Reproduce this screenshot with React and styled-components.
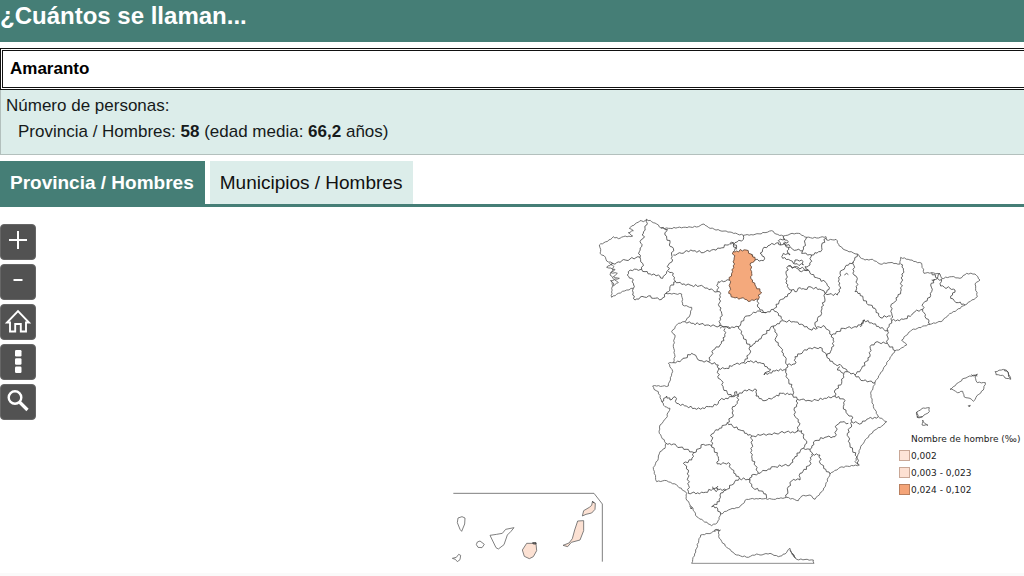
import React from "react";
import styled, { createGlobalStyle, css } from "styled-components";

const teal = "#457e76";
const mint = "#dcedea";

const GlobalStyle = createGlobalStyle`
  *, *::before, *::after { box-sizing: border-box; }
  body {
    margin: 0;
    background: #fff;
    color: #161a1a;
    font-family: "Liberation Sans", Arial, sans-serif;
    font-size: 17px;
  }
`;

const Header = styled.header`
  height: 42px;
  background: ${teal};
  color: #fff;
`;

const Title = styled.h1`
  margin: 0;
  font-size: 24px;
  line-height: 32px;
  font-weight: 700;
`;

const NameInput = styled.input`
  display: block;
  width: 100%;
  height: 42px;
  margin-top: 6px;
  padding: 0 7px;
  border: 3px double #111;
  border-right: 0;
  border-radius: 0;
  background: #fff;
  color: #000;
  font: inherit;
  font-weight: 700;
  outline: none;
`;

const Summary = styled.section`
  height: 65px;
  padding: 3px 5px;
  border: 1px solid #b3c0bd;
  border-top: 0;
  border-right: 0;
  background: ${mint};
`;

const SummaryLine = styled.p`
  margin: 0;
  padding-left: ${(p) => (p.$nested ? 12 : 0)}px;
  line-height: 26px;
`;

const Tabs = styled.div`
  display: flex;
  gap: 5px;
  margin-top: 6px;
  border-bottom: 3px solid ${teal};
`;

const Tab = styled.button`
  height: 43px;
  padding: 0 11px 0 10px;
  border: 0;
  background: ${mint};
  color: #111;
  font: inherit;
  font-size: 19px;
  ${(p) =>
    p.$active &&
    css`
      background: ${teal};
      color: #fff;
      font-weight: 700;
    `}
`;

const MapArea = styled.main`
  position: relative;
  display: flex;
  height: 366px;
`;

const Tools = styled.div`
  display: flex;
  flex-direction: column;
  gap: 4px;
  padding-top: 17px;
`;

const ToolButton = styled.button`
  display: grid;
  place-items: center;
  width: 36px;
  height: 36px;
  padding: 0;
  border: 1px solid #666;
  border-radius: 4px;
  background: #525252;
`;

const MapSvg = styled.svg`
  flex: 1;
  min-width: 0;
  height: 366px;
  fill: none;
  stroke: #444;
  stroke-width: 2.5;
  stroke-linejoin: round;
`;

const Legend = styled.aside`
  position: absolute;
  right: 5px;
  bottom: 75px;
  width: 120px;
  color: #222;
  font-family: "DejaVu Sans", Verdana, sans-serif;
  font-size: 9px;
  white-space: nowrap;
`;

const LegendTitle = styled.h2`
  margin: 0;
  padding-left: 12px;
  font-size: 9px;
  font-weight: 400;
  line-height: 15px;
`;

const LegendList = styled.ul`
  margin: 0;
  padding: 0;
  list-style: none;
`;

const LegendItem = styled.li`
  display: flex;
  align-items: center;
  gap: 1px;
  height: 17px;
`;

const Swatch = styled.span`
  width: 11px;
  height: 11px;
  border: 1px solid ${(p) => p.$edge};
  background: ${(p) => p.$fill};
`;

const Footer = styled.footer`
  height: 3px;
  background: #fafafa;
`;

// Adds small irregularities along each stretch of a boundary.
const WAVE = [0.9, -0.6, 0.3, 1, -1, 0.5, -0.3, -0.9, 0.7, -0.1];
function fray(points, amount) {
  const pts = points.split(" ").map((p) => p.split(",").map(Number));
  let n = Math.abs(pts[0][0] + pts[0][1]);
  let d = `M${pts[0].join(" ")}`;
  for (let i = 1; i < pts.length; i++) {
    const [ax, ay] = pts[i - 1];
    const [bx, by] = pts[i];
    const len = Math.hypot(bx - ax, by - ay);
    const parts = Math.max(1, Math.round(len / 6));
    for (let k = 1; k < parts; k++) {
      const off = WAVE[Math.round(n++) % WAVE.length] * amount;
      const x = ax + ((bx - ax) * k) / parts - ((by - ay) / len) * off;
      const y = ay + ((by - ay) * k) / parts + ((bx - ax) / len) * off;
      d += `L${x.toFixed(1)} ${y.toFixed(1)}`;
    }
    d += `L${bx} ${by}`;
  }
  return d;
}

const SHEETS = [
  {
    id: "northwest", x: 450, y: 0,
    coast: [
      "65,262 65,235 72,222 62,212 88,205 70,200 82,190 62,188 75,178 50,172 68,160 50,153 42,137 30,130 32,118 28,105 42,98 62,88 70,80 85,86 100,80 128,78 115,68 130,62 118,55 135,42 150,32 160,35 170,28 185,35 200,42 213,54 235,55 280,52 325,50 342,42 355,52 390,62 420,66 460,76",
      "65,262 85,250 110,240 130,235",
      "62,212 70,228 85,218 74,210 60,195 72,170 58,160",
      "228,250 275,252 278,285 305,292 300,315 285,335 265,340 245,365",
    ],
    border: [
      "170,28 172,40 165,55 160,70 160,85 150,95 155,110 148,125 150,142",
      "62,165 80,158 95,152 120,147 150,142",
      "150,142 158,160 155,178 140,178 115,185 112,195 125,205 130,220 130,235",
      "155,178 165,185 185,195 205,195 218,205 225,195",
      "213,54 232,58 225,75 240,98 238,105 250,115 245,135 248,150 235,165 235,180 225,195",
      "235,183 250,190 252,208 258,215 240,230 235,245 228,252",
      "130,235 128,255 135,270 150,262 175,258 190,265 215,268 228,250",
      "250,135 275,130 290,122 315,122 340,128 365,120 390,115 410,105 430,98",
      "420,102 430,98 440,112 430,125",
      "418,210 400,215 385,215 382,245",
      "258,218 300,225 340,230 382,245",
      "382,245 392,250 388,290 395,310 388,348",
      "285,335 310,340 350,345 388,348 405,350 420,355",
    ],
  },
  {
    id: "north", x: 870, y: 0,
    coast: [
      "40,76 75,73 105,68 125,62 138,72 160,78 180,72 205,70 230,82 260,84 288,80 290,90 318,88 328,108 345,120 382,132",
    ],
    border: [
      "40,76 40,88 15,98 10,105 20,118",
      "62,132 75,150 100,152 102,140 90,130 98,118 120,105 145,98 152,105",
      "160,78 165,88 145,92 152,105 165,100 180,110",
      "230,82 225,100 218,122",
      "160,85 175,95 160,100 175,112 200,120 218,122 215,130 245,135",
      "288,85 275,105 272,125 245,135 240,165 225,170 235,180 215,185 200,175 175,168",
      "175,112 172,122 180,135 160,130 158,145 175,148 190,160 195,150 215,150 220,165 195,162 190,160",
      "175,168 168,190 172,230 185,240 200,245 210,233 225,238 240,230 275,240 285,250 298,232 290,220 265,205 240,190 232,180 205,172 175,168",
      "382,132 370,155 345,172 330,190 325,215 332,235 322,255 285,250",
      "370,155 372,195 382,205 380,235 375,245 390,250",
      "343,195 350,190 355,194",
      "85,268 82,285 90,300 108,308 130,298 155,268 180,250 185,240",
      "130,298 145,310 158,330",
      "108,308 90,303 65,312 42,325 25,350 0,355 -10,350 -30,355",
      "130,348 158,332 190,335 220,345 240,358 262,355 255,345 265,320 275,310 275,290 285,270 285,250",
      "262,350 285,350 305,375 340,355 370,352 390,345 405,330",
    ],
  },
  {
    id: "northeast", x: 1260, y: 0,
    coast: [
      "-8,132 0,142 15,150 38,148 60,162 90,158 120,162 122,142 150,150 185,160 192,190 215,188 240,192 245,205 275,200 300,205 320,190 345,192 360,210 345,222 352,260 315,285 265,315 248,332 210,343 155,360 125,390",
    ],
    border: [
      "122,162 130,175 122,245 105,275 92,290 95,310 95,332",
      "0,250 20,280 45,295 60,322 92,318",
      "95,332 130,328 155,315 165,305 188,298",
      "225,208 212,225 215,245 210,262 190,280 188,298 195,320 205,328 210,343",
      "215,188 232,205 240,190",
      "215,210 245,208 242,228 270,235 285,240 272,265 295,278 315,285",
      "0,350 12,330 40,342 82,362",
      "95,332 82,362 85,362",
    ],
  },
  {
    id: "west", x: 600, y: 300,
    coast: [
      "95,65 105,75 100,110 105,140 100,158 85,160 98,185 85,228 38,228 42,238 55,245 65,275 75,290 90,295 78,325 60,345 58,370 78,400",
    ],
    border: [
      "295,50 310,80 330,110 345,100 365,80 400,48",
      "255,55 255,80 240,105 220,120 215,135 205,155",
      "100,158 125,150 155,130 170,142 180,152 205,155 235,165",
      "235,175 260,175 280,165 310,158 330,155",
      "330,110 330,130 310,158",
      "330,152 365,160 392,178 372,195",
      "235,165 235,205 245,212 250,235 275,260",
      "65,275 80,258 90,270 105,260 110,280 140,288 170,298 205,290 230,285 240,270 275,260 290,245 295,260",
      "275,260 295,255 315,240 350,240 348,258 375,272",
      "295,258 292,280 278,290 280,315 262,338",
    ],
  },
  {
    id: "east", x: 960, y: 300,
    coast: [
      "425,90 440,105 420,118 405,122",
      "405,122 375,168 345,218 332,250 340,290 355,320 380,335",
    ],
    border: [
      "40,48 50,70 48,95 60,110 75,140 82,165 78,180",
      "82,165 105,162 105,140 120,132 145,115 180,112 200,138",
      "215,75 222,95 215,118 200,138",
      "200,138 220,160 245,168 262,185 250,190 232,180 240,170",
      "382,62 382,100 345,98 330,110 330,140 305,175 285,195 262,185",
      "382,100 405,122",
      "285,195 310,212 345,218",
      "12,195 50,180 78,180",
      "78,180 82,205 98,235 98,255 65,250 40,262 15,272",
      "98,255 112,268 150,272 200,265 225,258 225,240 245,220 252,190",
      "225,258 255,272 250,290 262,312 275,318 275,335",
      "112,268 110,290 102,300 105,320 120,340 110,365",
      "275,335 305,340 320,328 355,320",
    ],
  },
  {
    id: "southwest", x: 600, y: 600,
    coast: [
      "78,100 75,115 60,125 55,145 40,172 50,215 80,212 110,225 140,250 138,265 155,290 170,320 215,347 232,338 242,312 265,300 300,290 320,268 360,265",
      "155,460 182,375 215,368 235,358 238,385 260,412 290,435 325,442 350,432 360,435",
    ],
    border: [
      "78,100 100,102 120,112 162,128",
      "162,128 155,150 130,160 145,180 145,250",
      "162,128 190,103 215,108",
      "215,105 215,72 262,38",
      "262,38 300,60 335,78 360,76",
      "215,105 235,140 232,162 265,158 272,175 298,205",
      "145,250 190,248 225,235 258,240 275,225 298,205",
      "218,230 228,245 234,228",
      "258,240 240,255 238,275 215,290 230,292 242,312",
      "148,288 156,296 150,294",
      "335,78 335,140 355,190",
      "298,205 330,210 335,195 355,190",
      "330,210 335,230 378,252 380,265",
      "222,362 242,360",
    ],
  },
  {
    id: "southeast", x: 960, y: 600,
    coast: [
      "380,35 370,45 345,60 320,85 305,105 292,140 285,155 298,165 240,172 210,192 190,240 165,268 150,255 125,258 115,272 80,262 40,268 0,265",
      "0,435 30,430 55,440 75,432 90,415 98,435 110,448 160,450 162,460",
      "90,420 104,442 96,430 108,446",
    ],
    border: [
      "0,76 30,72 60,68 110,65 125,62 130,80 140,100 130,115",
      "-5,190 15,182 40,170 90,165 105,140 130,115 150,118",
      "155,132 150,165 120,190 120,210 100,208 85,230 78,262",
      "150,118 158,132 180,135 180,160 210,192",
      "150,118 165,92 195,82 225,80 230,45 240,36 265,40",
      "275,35 275,45 262,70 270,105 290,140 295,165",
    ],
  },
  {
    id: "baleares", x: 1350, y: 420,
    coast: [
      "180,118 205,98 222,85 262,72 255,80 262,98 286,98 280,120 258,142 250,154 240,145 222,140 218,124 202,128 190,120 180,118",
      "315,65 340,58 355,68 362,88 345,84 338,76 318,74 315,65",
      "80,186 92,180 100,174 118,173 118,185 98,200 82,202 80,186",
      "98,210 104,220 114,226 96,225 98,210",
      "235,167 241,166 238,171 235,167",
    ],
    border: ["342,59 354,66 361,84", "244,74 262,78", "80,186 82,202 98,200"],
  },
];

const COAST_ROUGHNESS = 1.6;
const BORDER_ROUGHNESS = 3.4;
const palencia =
  "20,123 48,120 62,132 75,142 72,155 60,165 65,185 62,200 75,225 95,248 85,255 85,268 60,274 45,268 32,265 10,262 -4,250 0,232 -2,210 8,185 12,150 10,125 20,123";

function ProvinceMap() {
  return (
    <MapSvg
      viewBox="0 -9 1752 1098"
      preserveAspectRatio="xMaxYMin meet"
      role="img"
      aria-label="Mapa de provincias"
    >
      {SHEETS.map((s) => (
        <g key={s.id} transform={`translate(${s.x} ${s.y})`}>
          {s.coast.map((p) => (
            <path key={p} d={fray(p, COAST_ROUGHNESS)} stroke="#5a5a5a" />
          ))}
          {s.border.map((p) => (
            <path key={p} d={fray(p, BORDER_ROUGHNESS)} />
          ))}
        </g>
      ))}
      <path transform="translate(870 0)" d={fray(palencia, BORDER_ROUGHNESS)} fill="#f4a97c" stroke="#5b4030" />
      <path d="M755 1060H1122" stroke="#777" />
      <g transform="translate(0 810)" stroke="#666">
        <path d="M40 40H462L487 72V245" />
        <path d="M54 114L66 110L75 114L74 132L65 154L60 148L52 128Z" />
        <path d="M112 186L120 183L133 193L126 203L114 202L109 194Z" />
        <path d="M150 166L170 163L187 160L197 148L222 143L213 154L202 165L192 194L175 207L168 203Z" />
        <path d="M37 235L49 232L56 223L62 226L60 239L52 245L46 238Z" />
        <g fill="#fce1d3">
          <path d="M260 190L288 190L290 212L280 230L268 236L253 229L247 210Z" />
          <path d="M413 123L431 122L431 152L420 180L394 187L383 200L369 196L387 189L397 176L404 150Z" />
          <path d="M427 108L431 92L448 82L455 76L457 66L466 70L465 88L455 99L438 103Z" />
        </g>
        <path d="M278 188H288V192H280ZM456 64L463 68" stroke="#333" />
      </g>
    </MapSvg>
  );
}

function Icon({ children }) {
  return (
    <svg width="34" height="34" viewBox="0 0 34 34" fill="none" stroke="#fff" strokeWidth="2" aria-hidden="true">
      {children}
    </svg>
  );
}

const LEGEND = [
  { label: "0,002", fill: "#fde4d8", edge: "#c9a796" },
  { label: "0,003 - 0,023", fill: "#fde0d2", edge: "#c9a796" },
  { label: "0,024 - 0,102", fill: "#f4a478", edge: "#b97f5e" },
];

export default function App() {
  return (
    <>
      <GlobalStyle />
      <Header>
        <Title>¿Cuántos se llaman...</Title>
      </Header>
      <NameInput aria-label="Nombre" defaultValue="Amaranto" />
      <Summary>
        <SummaryLine>Número de personas:</SummaryLine>
        <SummaryLine $nested>
          Provincia / Hombres: <b>58</b> (edad media: <b>66,2</b> años)
        </SummaryLine>
      </Summary>
      <Tabs role="tablist">
        <Tab role="tab" aria-selected="true" $active>Provincia / Hombres</Tab>
        <Tab role="tab" aria-selected="false">Municipios / Hombres</Tab>
      </Tabs>
      <MapArea>
        <Tools>
          <ToolButton aria-label="Acercar">
            <Icon><path d="M8 15H26M17 6V24" /></Icon>
          </ToolButton>
          <ToolButton aria-label="Alejar">
            <Icon><path d="M12.5 15H21.5" /></Icon>
          </ToolButton>
          <ToolButton aria-label="Inicio">
            <Icon>
              <path d="M9 17.5H6L17 6L28 17.5H25V26.5H19.8V19H14.2V26.5H9Z" strokeWidth="1.9" />
            </Icon>
          </ToolButton>
          <ToolButton aria-label="Más opciones">
            <Icon>
              <g fill="#fff" stroke="none">
                <rect x="14" y="5" width="6.5" height="6.5" rx="1.2" />
                <rect x="14" y="13.3" width="6.5" height="6.5" rx="1.2" />
                <rect x="14" y="21.5" width="6.5" height="6.5" rx="1.2" />
              </g>
            </Icon>
          </ToolButton>
          <ToolButton aria-label="Buscar">
            <Icon>
              <circle cx="14" cy="12.5" r="6.3" strokeWidth="2.4" />
              <path d="M18.5 17L26.5 25" strokeWidth="3.2" />
            </Icon>
          </ToolButton>
        </Tools>
        <ProvinceMap />
        <Legend>
          <LegendTitle>Nombre de hombre (‰)</LegendTitle>
          <LegendList>
            {LEGEND.map((item) => (
              <LegendItem key={item.label}>
                <Swatch $fill={item.fill} $edge={item.edge} />
                {item.label}
              </LegendItem>
            ))}
          </LegendList>
        </Legend>
      </MapArea>
      <Footer />
    </>
  );
}
